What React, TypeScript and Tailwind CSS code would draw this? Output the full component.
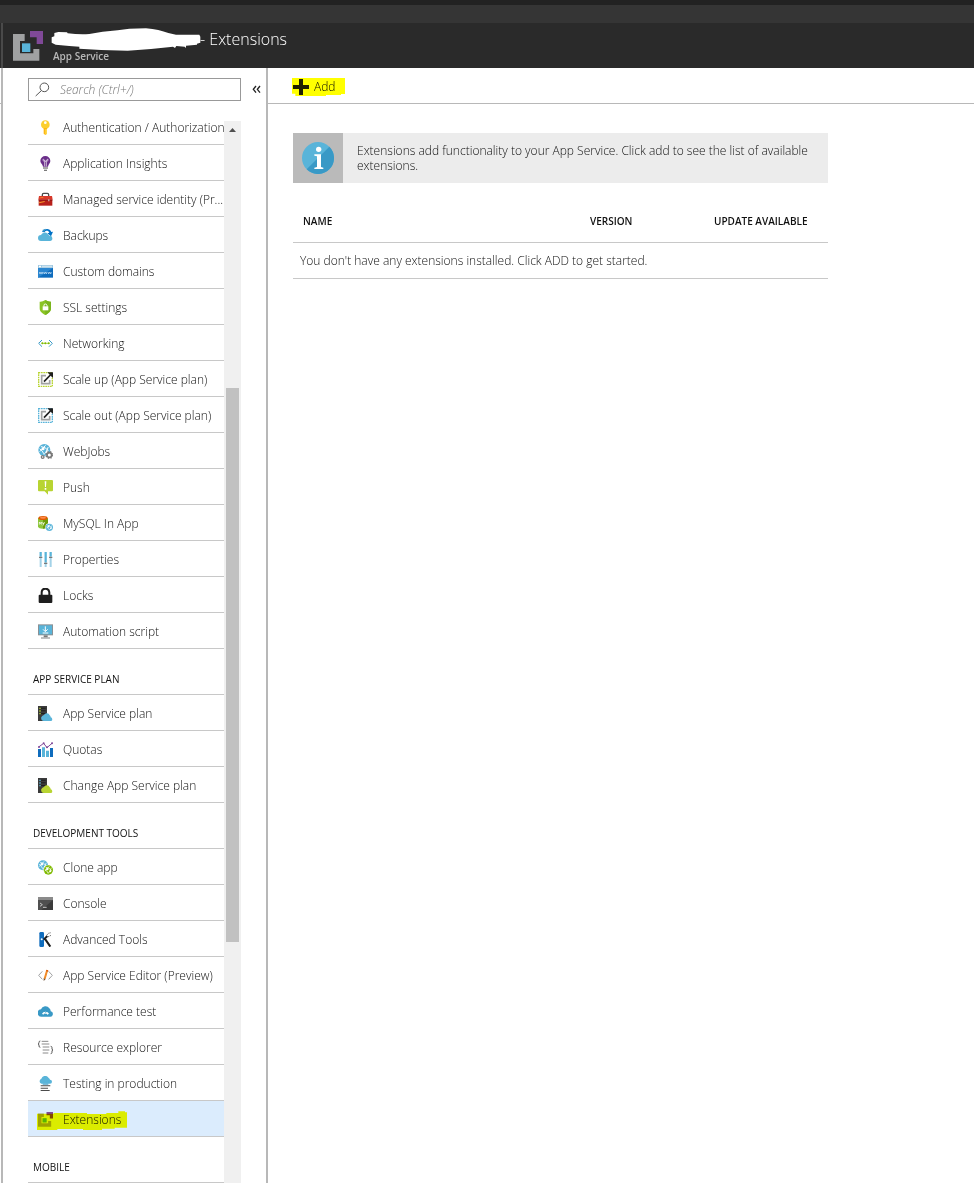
import type { ReactNode } from "react";

type Item = { label: string; icon: ReactNode; active?: boolean };

function Icon({ children }: { children: ReactNode }) {
  return (
    <svg viewBox="0 0 45 45" className="size-[15px] shrink-0" aria-hidden="true">
      {children}
    </svg>
  );
}

function Globe({ cx, cy, r, color }: { cx: number; cy: number; r: number; color: string }) {
  return (
    <g transform={`translate(${cx} ${cy}) scale(${r / 14})`}>
      <circle r="14" fill={color} />
      <path
        d="M-11-3Q-4 2-1 9M-8-8Q2-8 10 2M-1 11Q6 5 9-7M-11 4Q-5-2 3-11"
        fill="none"
        stroke="#fff"
        strokeWidth="2.2"
      />
      <circle cx="-3" cy="-3" r="3.6" fill="#fff" />
      <circle cx="6" cy="4" r="3" fill="#fff" />
    </g>
  );
}

function ScaleIcon({ color }: { color: string }) {
  return (
    <Icon>
      <rect x="2" y="2" width="41" height="41" fill="none" stroke={color} strokeWidth="4" strokeDasharray="5 2" />
      <path d="M24 11H11v24h24V24" fill="none" stroke="#a0a1a2" strokeWidth="5" />
      <path d="M18 29 40 6" stroke="#1e1e1e" strokeWidth="5" />
      <path d="M28 1h17v17z" fill="#1e1e1e" />
    </Icon>
  );
}

function ServerIcon({ light, cloud }: { light: string; cloud: string }) {
  return (
    <Icon>
      <path d="M0 0h27v45H0z" fill="#3b3b3b" />
      <path d="M9 5h14v3H9zM9 13h14v3H9zM9 21h14v3H9z" fill="#1e1e1e" />
      <path d="M4 5h4v4H4zM4 13h4v4H4zM4 21h4v4H4z" fill={light} />
      <path d="M17 45a8 8 0 0 1-5-14 8 8 0 0 1 6-4 9 9 0 0 1 17 1 7 7 0 0 1 3 6 6 6 0 0 1 2 11z" fill={cloud} />
    </Icon>
  );
}

function AppServiceMark({ className }: { className: string }) {
  return (
    <svg viewBox="0 0 90 90" className={className} aria-hidden="true">
      <path d="M0 9h35v21H21v37h40V54h18v35H0z" fill="#a0a1a2" />
      <path d="M51 0h39v39H71V19H51z" fill="#804998" />
      <path d="M27 37h25v26H27z" fill="#59b4d9" />
    </svg>
  );
}

const settings: Item[] = [
  {
    label: "Authentication / Authorization",
    icon: (
      <Icon>
        <circle cx="22" cy="14" r="13" fill="#fccf2e" />
        <path d="M17 24h10v17l-5 4-5-4z" fill="#fcb714" />
        <path d="M22 27h5v14l-5 4z" fill="#ffd84a" />
        <circle cx="22" cy="8" r="4" fill="#fff" />
      </Icon>
    ),
  },
  {
    label: "Application Insights",
    icon: (
      <Icon>
        <path d="M22 0a15 15 0 0 1 15 15c0 7-6 9-7 17H15C14 24 7 22 7 15A15 15 0 0 1 22 0z" fill="#6b2f8a" />
        <path d="M20 31V16h5v15M20 15c-6 1-7-5-4-5 3 0 4 3 4 5zM25 15c6 1 7-5 4-5-3 0-4 3-4 5z" fill="none" stroke="#fff" strokeWidth="2" />
        <path d="M15 34h15v4H15z" fill="#7a7a7a" />
        <path d="M18 41h9v4h-9z" fill="#7a7a7a" />
      </Icon>
    ),
  },
  {
    label: "Managed service identity (Pr...",
    icon: (
      <Icon>
        <path d="M13 14V8q0-4 4-4h11q4 0 4 4v6" fill="none" stroke="#4b4b4b" strokeWidth="4" />
        <path d="M3 12h39l2 11H1z" fill="#d9382a" />
        <path d="M2 23h41v18H2z" fill="#b8201a" />
        <path d="M2 23h41v3H2z" fill="#8c1413" />
        <path d="M3 31 20 27v3L3 34zM5 17l11-2v2L5 19z" fill="#f59d2a" />
        <path d="M31 22h3v6h-3z" fill="#ddd" />
      </Icon>
    ),
  },
  {
    label: "Backups",
    icon: (
      <Icon>
        <path d="M12 12C20 0 36 1 40 12l5-1-6 14-11-9 6-2c-3-7-11-7-14-1z" fill="#0072c6" />
        <path d="M13 6 23 2l-5 11z" fill="#3999c6" />
        <path d="M9 39a9 9 0 0 1 0-18 12 12 0 0 1 20-3 9 9 0 0 1 5 5 8 8 0 0 1 2 16z" fill="#59b4d9" />
      </Icon>
    ),
  },
  {
    label: "Custom domains",
    icon: (
      <Icon>
        <path d="M0 3h45v10H0z" fill="#a0c8e0" />
        <path d="M0 12h45v29H0z" fill="#0f6cbd" />
        <path d="M0 12h45L0 41z" fill="#2b86d0" />
        <path d="M3 5h6v5H3z" fill="#fff" />
        <path d="M12 5h30v5H12z" fill="#cfe3ef" />
        <path d="m4 24 2 6 3-6 3 6 2-6M17 24l2 6 3-6 3 6 2-6M30 24l2 6 3-6 3 6 2-6" fill="none" stroke="#cfe6f7" strokeWidth="2" />
      </Icon>
    ),
  },
  {
    label: "SSL settings",
    icon: (
      <Icon>
        <path d="M22 0q9 6 17 5v20c0 10-8 16-17 20C13 41 5 35 5 25V5q8 1 17-5z" fill="#8ac425" />
        <path d="M22 0q9 6 17 5v20c0 10-8 16-17 20z" fill="#7ab51d" />
        <path d="M14 19h17v12H14z" fill="#fff" />
        <path d="M18 20v-4q0-4 4-4t5 4v4" fill="none" stroke="#fff" strokeWidth="3" />
      </Icon>
    ),
  },
  {
    label: "Networking",
    icon: (
      <Icon>
        <path d="M12 12 2 22l10 10M33 12l10 10-10 10" fill="none" stroke="#3999c6" strokeWidth="3" />
        <path d="M11 22h24" stroke="#7fba00" strokeWidth="2" />
        <circle cx="13" cy="22" r="3" fill="#7fba00" />
        <circle cx="22" cy="22" r="3" fill="#7fba00" />
        <circle cx="32" cy="22" r="3" fill="#7fba00" />
      </Icon>
    ),
  },
  { label: "Scale up (App Service plan)", icon: <ScaleIcon color="#b8d432" /> },
  { label: "Scale out (App Service plan)", icon: <ScaleIcon color="#59b4d9" /> },
  {
    label: "WebJobs",
    icon: (
      <Icon>
        <Globe cx={19} cy={18} r={18} color="#59b4d9" />
        <circle cx="34" cy="33" r="7" fill="#fff" stroke="#7a7a7a" strokeWidth="5" />
        <circle cx="34" cy="33" r="10" fill="none" stroke="#7a7a7a" strokeWidth="4" strokeDasharray="4 4" />
        <circle cx="14" cy="39" r="4" fill="none" stroke="#7a7a7a" strokeWidth="4" />
      </Icon>
    ),
  },
  {
    label: "Push",
    icon: (
      <Icon>
        <path d="M3 0h39q3 0 3 3v28q0 3-3 3H30v10L20 34H3q-3 0-3-3V3q0-3 3-3z" fill="#b8d432" />
        <path d="M20 4h5l-1 17h-3zM20 24h5v5h-5z" fill="#fff" />
      </Icon>
    ),
  },
  {
    label: "MySQL In App",
    icon: (
      <Icon>
        <path d="M0 6v27q3 5 13 5t17-5V6z" fill="#8cc63a" />
        <path d="M15 10h15v23q-4 5-15 5z" fill="#6a9e0a" />
        <ellipse cx="15" cy="6" rx="14" ry="6" fill="#dd5900" />
        <ellipse cx="15" cy="5" rx="9" ry="3" fill="#ff8c4a" />
        <path d="M4 26v-8l3 5 3-5v8M13 19l3 5 3-5-4 10" fill="none" stroke="#fff" strokeWidth="2" />
        <circle cx="34" cy="34" r="12" fill="#fff" />
        <Globe cx={34} cy={34} r={11} color="#59b4d9" />
      </Icon>
    ),
  },
  {
    label: "Properties",
    icon: (
      <Icon>
        <path d="M5 0h6v45H5zM20 0h6v45h-6zM35 0h6v45h-6z" fill="#a3d2e8" />
        <path d="M5 0h6v13H5zM20 0h6v31h-6zM35 0h6v13h-6z" fill="#59b4d9" />
        <path d="M3 14h10v4H3zM18 32h10v4H18zM33 14h10v4H33z" fill="#7a7a7a" />
      </Icon>
    ),
  },
  {
    label: "Locks",
    icon: (
      <Icon>
        <path d="M11 22V14q0-12 11-12t12 12v8" fill="none" stroke="#1e1e1e" strokeWidth="6" />
        <rect x="2" y="20" width="41" height="25" rx="3" fill="#1e1e1e" />
      </Icon>
    ),
  },
  {
    label: "Automation script",
    icon: (
      <Icon>
        <path d="M0 1h45v33H0z" fill="#8a9094" />
        <path d="M3 4h39v27H3z" fill="#59b4d9" />
        <path d="M17 34h12v6H17z" fill="#7a7a7a" />
        <path d="M9 40h27v4H9z" fill="#a0a1a2" />
        <path d="M22 7v15M15 16l7 7 7-7M14 27h17" fill="none" stroke="#fff" strokeWidth="3" />
      </Icon>
    ),
  },
];

const plan: Item[] = [
  { label: "App Service plan", icon: <ServerIcon light="#b8d432" cloud="#59b4d9" /> },
  {
    label: "Quotas",
    icon: (
      <Icon>
        <path d="M0 21h9v24H0z" fill="#0f6cbd" />
        <path d="M12 16h9v29h-9zM24 26h9v19h-9z" fill="#59b4d9" />
        <path d="M36 18h9v27h-9z" fill="#0f6cbd" />
        <path d="M2 15 17 4l10 13L43 3" fill="none" stroke="#804998" strokeWidth="3" />
        <circle cx="3" cy="15" r="3" fill="#804998" />
        <circle cx="17" cy="4" r="3" fill="#804998" />
        <circle cx="27" cy="16" r="3" fill="#804998" />
        <circle cx="42" cy="4" r="3" fill="#804998" />
      </Icon>
    ),
  },
  { label: "Change App Service plan", icon: <ServerIcon light="#59b4d9" cloud="#b8d432" /> },
];

const devTools: Item[] = [
  {
    label: "Clone app",
    icon: (
      <Icon>
        <Globe cx={15} cy={16} r={15} color="#59b4d9" />
        <circle cx="31" cy="30" r="15" fill="#fff" />
        <Globe cx={31} cy={30} r={14} color="#7fba00" />
      </Icon>
    ),
  },
  {
    label: "Console",
    icon: (
      <Icon>
        <path d="M0 3h45v39H0z" fill="#3b3b3b" />
        <path d="M0 12h45L10 42H0z" fill="#505050" />
        <path d="M0 3h45v9H0z" fill="#8a8a8a" />
        <path d="m6 21 7 5-7 5M15 34h11" fill="none" stroke="#ddd" strokeWidth="2.5" />
      </Icon>
    ),
  },
  {
    label: "Advanced Tools",
    icon: (
      <Icon>
        <rect x="4" y="0" width="14" height="45" rx="4" fill="#0f6cbd" />
        <circle cx="11" cy="22" r="3" fill="#fff" />
        <path d="m17 23 11-11M22 22l15 22" fill="none" stroke="#1e1e1e" strokeWidth="6" />
        <path d="m26 10 5-6 8-2M29 15l10-5" fill="none" stroke="#7a7a7a" strokeWidth="3" strokeDasharray="5 2" />
      </Icon>
    ),
  },
  {
    label: "App Service Editor (Preview)",
    icon: (
      <Icon>
        <path d="M13 10 2 22l11 12M32 10l11 12-11 12" fill="none" stroke="#a0a1a2" strokeWidth="3" />
        <path d="M27 8 20 32" stroke="#f28c28" strokeWidth="6" />
        <path d="m17 31 6 2-6 6z" fill="#6b4a2b" />
        <path d="m25 5 6 2-1 4-6-2z" fill="#dd5900" />
      </Icon>
    ),
  },
  {
    label: "Performance test",
    icon: (
      <Icon>
        <path d="M11 38a11 11 0 0 1-2-22 14 14 0 0 1 25-3 10 10 0 0 1 4 9 8 8 0 0 1-3 16z" fill="#3999c6" />
        <path d="M12 29a11 8 0 0 1 21 0l-5 3-2-3h-8l-2 3z" fill="#fff" />
        <path d="m21 28 6-7" stroke="#3999c6" strokeWidth="2" />
      </Icon>
    ),
  },
  {
    label: "Resource explorer",
    icon: (
      <Icon>
        <path d="M7 3Q3 3 3 7v3l-3 2 3 2v4q0 4 4 4M38 19q4 0 4 4v5l3 2-3 2v5q0 4-4 4" fill="none" stroke="#5a5a5a" strokeWidth="3" />
        <path d="M11 4h20M11 12h23M14 21h20M14 30h20M14 39h17" stroke="#8a8a8a" strokeWidth="3" />
      </Icon>
    ),
  },
  {
    label: "Testing in production",
    icon: (
      <Icon>
        <path d="M10 23a8 8 0 0 1 0-15 12 12 0 0 1 22-2 7 7 0 0 1 4 5 6 6 0 0 1 0 12z" fill="#59b4d9" />
        <path d="M14 23h17v3H14z" fill="#3999c6" />
        <path d="M8 28h29v3H8zM8 35h22v3H8zM8 42h27v3H8z" fill="#4b4b4b" />
      </Icon>
    ),
  },
  { label: "Extensions", active: true, icon: <AppServiceMark className="size-[15px] shrink-0" /> },
];

function NavList({ items }: { items: Item[] }) {
  return (
    <ul>
      {items.map(({ label, icon, active }) => (
        <li key={label}>
          <a
            href="#"
            aria-current={active ? "page" : undefined}
            className={
              active
                ? "relative flex h-9 items-center gap-2.5 border-b border-[#c8c8c8] bg-[#dbecfd] pt-0.5 pl-2.5"
                : "flex h-9 items-center gap-2.5 border-b border-[#c8c8c8] pt-0.5 pl-2.5"
            }
          >
            {icon}
            <span className="whitespace-nowrap">{label}</span>
            {active && (
              <svg viewBox="0 0 270 57" className="absolute top-2.5 left-[9px] h-[19px] w-[90px] mix-blend-multiply" aria-hidden="true">
                <path d="M0 8h50v-2h100v3h58V6h36V1h20v3h9v46h-40v3h-38v4h-57v-3H61v3H0z" fill="#ff0" />
              </svg>
            )}
          </a>
        </li>
      ))}
    </ul>
  );
}

function SectionTitle({ children }: { children: string }) {
  return (
    <h2 className="flex h-[46px] items-center border-b border-[#c8c8c8] pt-4 pl-[5px] text-[10px] font-normal">
      {children}
    </h2>
  );
}

export default function App() {
  return (
    <div className="flex min-h-screen flex-col bg-white font-['Open_Sans','Noto_Sans',sans-serif] text-[12px] leading-[15px] font-light text-[#111]">
      <div className="h-[5px] bg-[#222]" />
      <div className="h-[18px] bg-[#353535]" />
      <header className="flex h-[45px] bg-[#2a2a2a] pl-px">
        <div className="w-0.5 bg-[#4a4a4a]" />
        <AppServiceMark className="mt-2 ml-2.5 size-[30px] shrink-0" />
        <div className="relative ml-[10px] text-white">
          <svg viewBox="0 0 456 72" className="absolute top-[5px] -left-0.5 h-6 w-[152px]" aria-hidden="true">
            <path
              d="M2 28 10 25 10 15 22 12 48 13 50 16Q85 20 115 18L155 11 200 7 235 2 285 1Q325 5 352 15L375 20 445 20 448 26 448 44 438 47 438 50 405 53 405 60 401 56 376 54 372 60 366 56 300 63 230 68 150 66 85 62 85 56 55 54 14 50 2 44z"
              fill="#fff"
            />
          </svg>
          <h1 className="pt-1.5 pl-[147px] text-[16px] leading-5 font-light whitespace-nowrap">- Extensions</h1>
          <p className="text-[10px] leading-[14px] font-semibold text-[#b8b8b8]">App Service</p>
        </div>
      </header>
      <div className="flex grow">
        <div className="h-9 w-px shrink-0 border-b border-[#b8b8b8]" />
        <aside className="flex w-[267px] shrink-0 flex-col border-x-2 border-[#b8b8b8] pl-[25px]">
          <div className="flex pt-2.5">
            <div className="flex h-[23px] w-[213px] items-center border border-[#999] pl-1.5">
              <svg viewBox="0 0 45 45" className="size-[15px] shrink-0" aria-hidden="true">
                <circle cx="28" cy="16" r="13" fill="none" stroke="#555" strokeWidth="3" />
                <path d="M19 26 2 42" stroke="#555" strokeWidth="3" />
              </svg>
              <input
                type="text"
                aria-label="Search"
                placeholder="Search (Ctrl+/)"
                className="ml-2.5 w-40 bg-transparent italic outline-none placeholder:text-[#777]"
              />
            </div>
            <button type="button" aria-label="Collapse menu" className="ml-[11px] text-[#222]">
              <svg viewBox="0 0 27 27" className="size-[9px]" aria-hidden="true">
                <path d="M12 3 4 13l8 10M24 3l-8 10 8 10" fill="none" stroke="currentColor" strokeWidth="4" />
              </svg>
            </button>
          </div>
          <div className="mt-2 flex grow">
            <nav className="w-[196px]" aria-label="App Service menu">
              <NavList items={settings} />
              <SectionTitle>APP SERVICE PLAN</SectionTitle>
              <NavList items={plan} />
              <SectionTitle>DEVELOPMENT TOOLS</SectionTitle>
              <NavList items={devTools} />
              <SectionTitle>MOBILE</SectionTitle>
            </nav>
            <div className="mt-3 flex w-[17px] flex-col items-center bg-[#f0f0f0]" aria-hidden="true">
              <svg viewBox="0 0 17 17" className="size-[17px] shrink-0">
                <path d="M5 11 8.500 7 12 11z" fill="#505050" />
              </svg>
              <div className="grow-[250]" />
              <div className="w-[13px] grow-[554] bg-[#c1c1c1]" />
              <div className="grow-[241]" />
            </div>
          </div>
        </aside>
        <main className="min-w-0 grow">
          <div className="flex h-9 border-b border-[#b8b8b8] pl-[25px]">
            <button type="button" className="relative flex h-[37px] items-center gap-[5px]">
              <svg viewBox="0 0 16 16" className="size-4" aria-hidden="true">
                <path d="M6 0h4v6h6v4h-6v6H6v-6H0V6h6z" fill="#222" />
              </svg>
              <span>Add</span>
              <svg viewBox="0 0 162 57" className="absolute top-2.5 -left-px h-[19px] w-[54px] mix-blend-multiply" aria-hidden="true">
                <path d="M0 0h159v48h-12v3h-45v3H10v-7H0z" fill="#ff0" />
              </svg>
            </button>
          </div>
          <div className="max-w-[560px] pt-[29px] pl-[25px]">
            <div className="flex bg-[#ececec]">
              <div className="flex size-[50px] shrink-0 items-center justify-center bg-[#bababa]">
                <svg viewBox="0 0 96 96" className="size-8" aria-hidden="true">
                  <circle cx="48" cy="48" r="48" fill="#59b4d9" />
                  <path d="M82 14A48 48 0 0 1 14 82z" fill="#3999c6" />
                  <circle cx="50" cy="22" r="8" fill="#fff" />
                  <path d="M37 37h20v38l7 2v4H37v-4l8-2V43l-8-2z" fill="#fff" />
                </svg>
              </div>
              <p className="self-center pr-2 pl-3.5">
                Extensions add functionality to your App Service. Click add to see the list of available extensions.
              </p>
            </div>
            <table className="mt-[19px] w-full table-fixed text-left">
              <thead>
                <tr className="h-10 border-b border-[#c8c8c8] text-[10px]">
                  <th className="w-[287px] pl-2.5 font-semibold">NAME</th>
                  <th className="pl-2.5 font-semibold">VERSION</th>
                  <th className="pl-2.5 font-semibold">UPDATE AVAILABLE</th>
                </tr>
              </thead>
              <tbody>
                <tr className="h-9 border-b border-[#c8c8c8]">
                  <td colSpan={3} className="pl-[7px]">
                    You don't have any extensions installed. Click ADD to get started.
                  </td>
                </tr>
              </tbody>
            </table>
          </div>
        </main>
      </div>
    </div>
  );
}
